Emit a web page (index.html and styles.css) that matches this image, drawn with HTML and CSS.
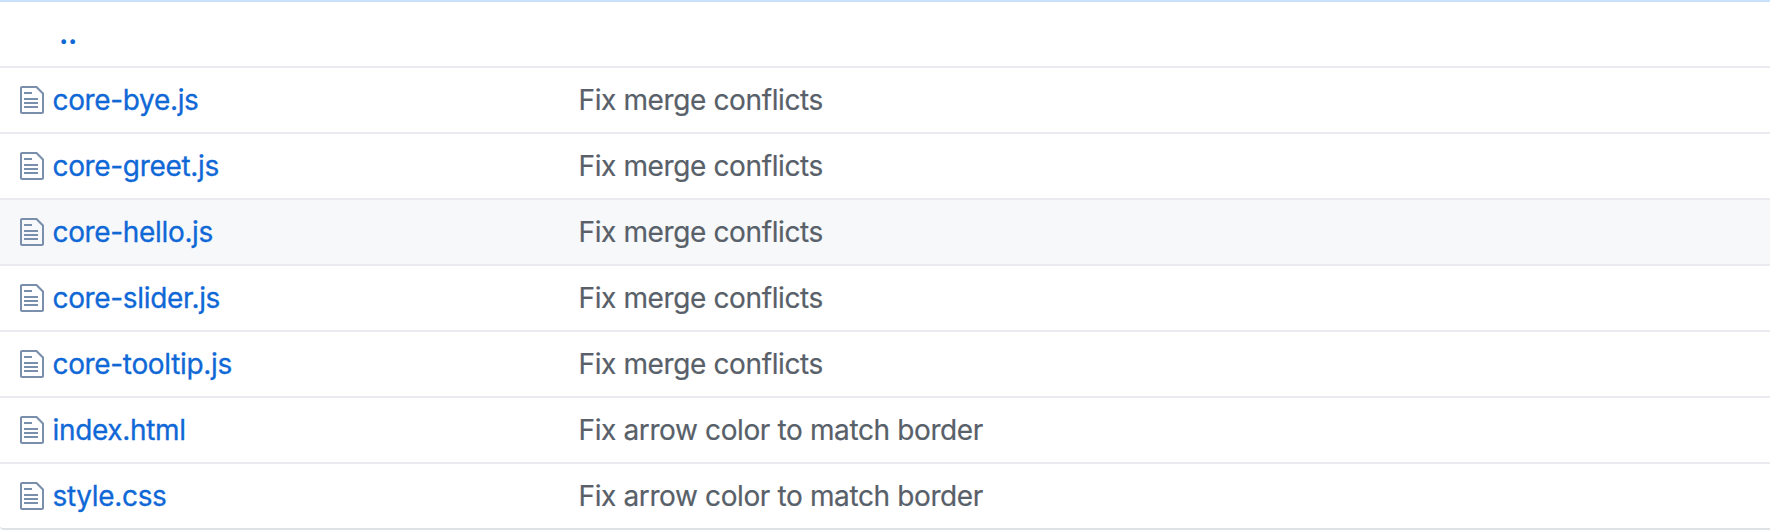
FILE: index.html
```html
<!DOCTYPE html>
<html lang="en">
<head>
<meta charset="utf-8">
<title>Files</title>
<link rel="stylesheet" href="styles.css">
</head>
<body>
<svg class="defs" aria-hidden="true"><symbol id="file" viewBox="0 0 12 16"><path fill-rule="evenodd" d="M6 5H2V4h4v1zM2 8h7V7H2v1zm0 2h7V9H2v1zm0 2h7v-1H2v1zm10-7.5V14c0 .55-.45 1-1 1H1c-.55 0-1-.45-1-1V2c0-.55.45-1 1-1h7.5L12 4.5zM11 5L8 2H1v12h10V5z"/></symbol></svg>
<main class="files">
  <div class="row up"><a class="parent">..</a></div>
  <div class="row"><svg class="icon"><use href="#file"/></svg><a class="name">core-bye.js</a><span class="message">Fix merge conflicts</span></div>
  <div class="row"><svg class="icon"><use href="#file"/></svg><a class="name">core-greet.js</a><span class="message">Fix merge conflicts</span></div>
  <div class="row active"><svg class="icon"><use href="#file"/></svg><a class="name">core-hello.js</a><span class="message">Fix merge conflicts</span></div>
  <div class="row"><svg class="icon"><use href="#file"/></svg><a class="name">core-slider.js</a><span class="message">Fix merge conflicts</span></div>
  <div class="row"><svg class="icon"><use href="#file"/></svg><a class="name">core-tooltip.js</a><span class="message">Fix merge conflicts</span></div>
  <div class="row"><svg class="icon"><use href="#file"/></svg><a class="name">index.html</a><span class="message">Fix arrow color to match border</span></div>
  <div class="row"><svg class="icon"><use href="#file"/></svg><a class="name">style.css</a><span class="message">Fix arrow color to match border</span></div>
</main>
</body>
</html>
```
FILE: styles.css
```css
* { box-sizing: border-box; }
body {
  margin: 0;
  background: #fff;
  font: 28px/40px Inter, "Liberation Sans", sans-serif;
  overflow: hidden;
}
.defs { display: none; }
.files {
  height: 530px;
  border-bottom: 2px solid #dfe2e5;
  border-bottom-left-radius: 4px;
}
.row {
  display: grid;
  grid-template-columns: 24px 517.5px 1fr;
  column-gap: 8.5px;
  align-items: center;
  height: 66px;
  padding-left: 20px;
  border-top: 2px solid #eaebf0;
}
.up {
  display: block;
  padding: 12px 0 0 59px;
  border-top-color: #c8e1ff;
}
.active { background: #f6f8fa; }
.icon {
  width: 24px;
  height: 32px;
  fill: #7a8fac;
}
.name, .parent { color: #0f68d6; }
.name {
  letter-spacing: -0.34px;
  -webkit-text-stroke: 0.3px;
}
.parent {
  font-weight: 700;
  letter-spacing: -0.3px;
}
.message {
  color: #586069;
  letter-spacing: -0.38px;
  -webkit-text-stroke: 0.2px;
}
```
